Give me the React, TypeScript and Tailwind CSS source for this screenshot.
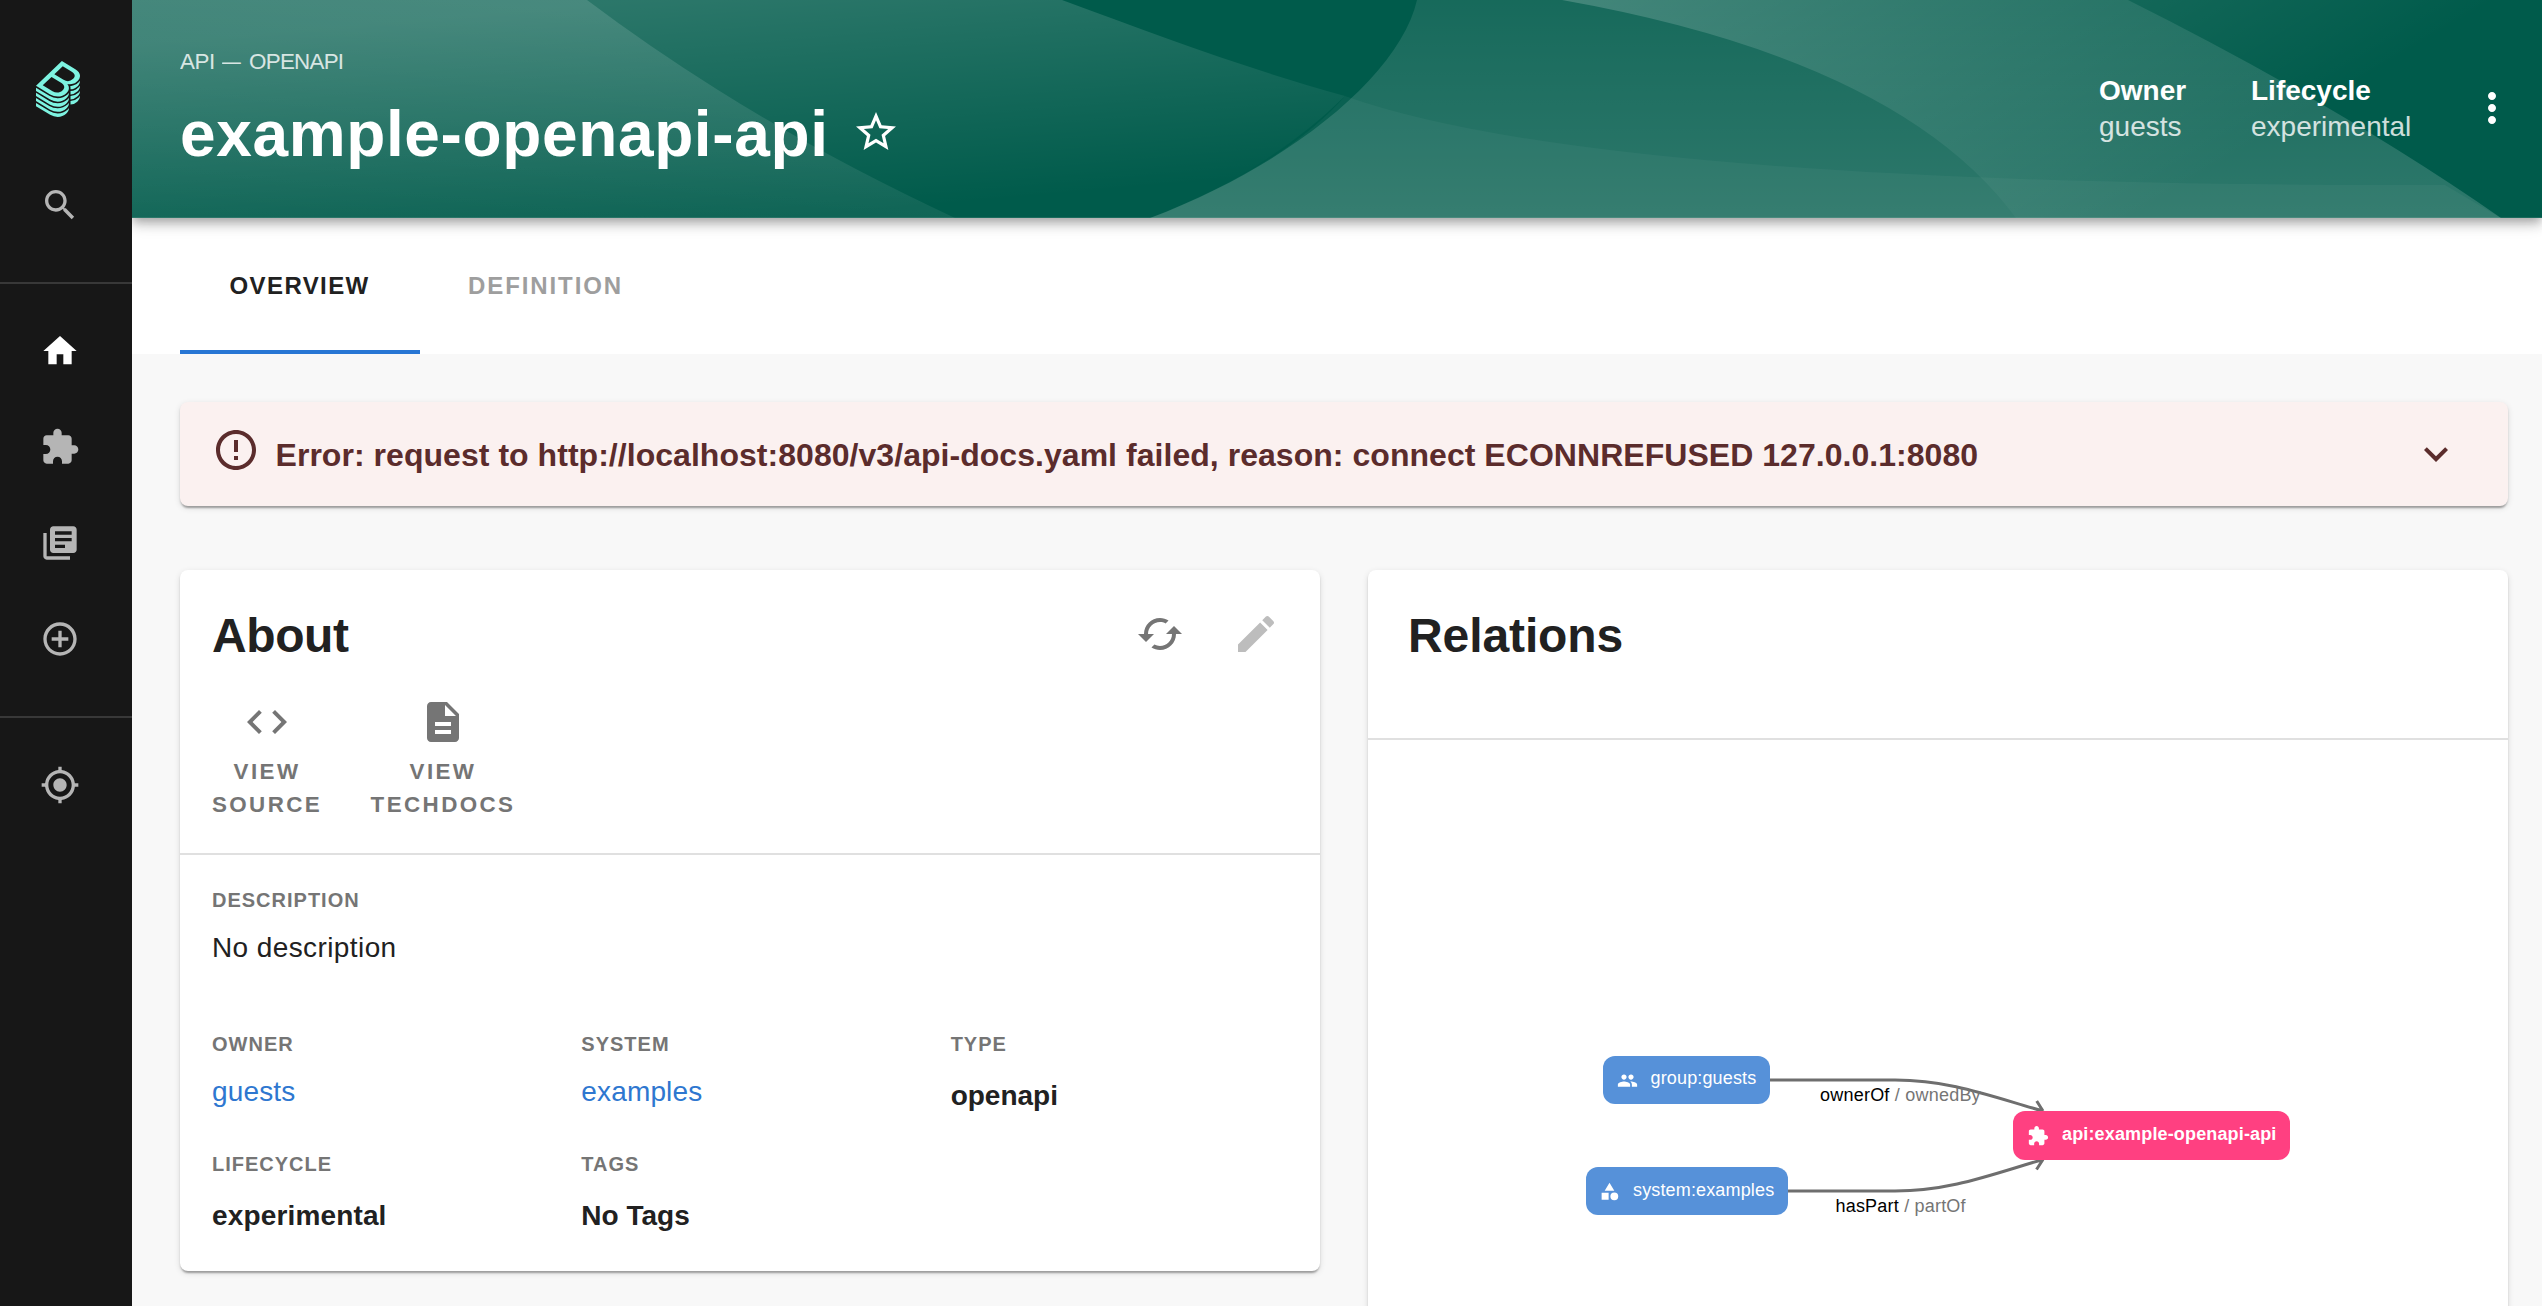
import type { ReactNode } from "react";

const ICONS = {
  search: "M15.5 14h-.79l-.28-.27C15.41 12.59 16 11.11 16 9.5 16 5.91 13.09 3 9.5 3S3 5.91 3 9.5 5.91 16 9.5 16c1.61 0 3.09-.59 4.23-1.57l.27.28v.79l5 4.99L20.49 19l-4.99-5zm-6 0C7.01 14 5 11.99 5 9.5S7.01 5 9.5 5 14 7.01 14 9.5 11.99 14 9.5 14z",
  home: "M10 20v-6h4v6h5v-8h3L12 3 2 12h3v8z",
  extension: "M20.5 11H19V7c0-1.1-.9-2-2-2h-4V3.5C13 2.12 11.88 1 10.5 1S8 2.12 8 3.5V5H4c-1.1 0-1.99.9-1.99 2v3.8H3.5c1.49 0 2.7 1.21 2.7 2.7s-1.21 2.7-2.7 2.7H2V20c0 1.1.9 2 2 2h3.8v-1.5c0-1.49 1.21-2.7 2.7-2.7 1.49 0 2.7 1.21 2.7 2.7V22H17c1.1 0 2-.9 2-2v-4h1.5c1.38 0 2.5-1.12 2.5-2.5S21.88 11 20.5 11z",
  library: "M4 6H2v14c0 1.1.9 2 2 2h14v-2H4V6zm16-4H8c-1.1 0-2 .9-2 2v12c0 1.1.9 2 2 2h12c1.1 0 2-.9 2-2V4c0-1.1-.9-2-2-2zm-1 9H9V9h10v2zm-4 4H9v-2h6v2zm4-8H9V5h10v2z",
  add: "M13 7h-2v4H7v2h4v4h2v-4h4v-2h-4V7zm-1-5C6.48 2 2 6.48 2 12s4.48 10 10 10 10-4.48 10-10S17.52 2 12 2zm0 18c-4.41 0-8-3.59-8-8s3.59-8 8-8 8 3.59 8 8-3.59 8-8 8z",
  location: "M12 8c-2.21 0-4 1.79-4 4s1.79 4 4 4 4-1.79 4-4-1.79-4-4-4zm8.94 3c-.46-4.17-3.77-7.48-7.94-7.94V1h-2v2.06C6.83 3.52 3.52 6.83 3.06 11H1v2h2.06c.46 4.17 3.77 7.48 7.94 7.94V23h2v-2.06c4.17-.46 7.48-3.77 7.94-7.94H23v-2h-2.06zM12 19c-3.87 0-7-3.13-7-7s3.13-7 7-7 7 3.13 7 7-3.13 7-7 7z",
  star: "M22 9.24l-7.19-.62L12 2 9.19 8.63 2 9.24l5.46 4.73L5.82 21 12 17.27 18.18 21l-1.63-7.03L22 9.24zM12 15.4l-3.76 2.27 1-4.28-3.32-2.88 4.38-.38L12 6.1l1.71 4.04 4.38.38-3.32 2.88 1 4.28L12 15.4z",
  more: "M12 8c1.1 0 2-.9 2-2s-.9-2-2-2-2 .9-2 2 .9 2 2 2zm0 2c-1.1 0-2 .9-2 2s.9 2 2 2 2-.9 2-2-.9-2-2-2zm0 6c-1.1 0-2 .9-2 2s.9 2 2 2 2-.9 2-2-.9-2-2-2z",
  error: "M11 15h2v2h-2zm0-8h2v6h-2zm.99-5C6.47 2 2 6.48 2 12s4.47 10 9.99 10C17.52 22 22 17.52 22 12S17.52 2 11.99 2zM12 20c-4.42 0-8-3.58-8-8s3.58-8 8-8 8 3.58 8 8-3.58 8-8 8z",
  expand: "M16.59 8.59L12 13.17 7.41 8.59 6 10l6 6 6-6z",
  cached: "M19 8l-4 4h3c0 3.31-2.69 6-6 6-1.01 0-1.97-.25-2.8-.7l-1.46 1.46C8.97 19.54 10.43 20 12 20c4.42 0 8-3.58 8-8h3l-4-4zM6 12c0-3.31 2.69-6 6-6 1.01 0 1.97.25 2.8.7l1.46-1.46C15.03 4.46 13.57 4 12 4c-4.42 0-8 3.58-8 8H1l4 4 4-4H6z",
  edit: "M3 17.25V21h3.75L17.81 9.94l-3.75-3.75L3 17.25zM20.71 7.04c.39-.39.39-1.02 0-1.41l-2.34-2.34c-.39-.39-1.02-.39-1.41 0l-1.83 1.83 3.75 3.75 1.83-1.83z",
  code: "M9.4 16.6L4.8 12l4.6-4.6L8 6l-6 6 6 6 1.4-1.4zm5.2 0l4.6-4.6-4.6-4.6L16 6l6 6-6 6-1.4-1.4z",
  description: "M14 2H6c-1.1 0-1.99.9-1.99 2L4 20c0 1.1.89 2 1.99 2H18c1.1 0 2-.9 2-2V8l-6-6zm2 16H8v-2h8v2zm0-4H8v-2h8v2zm-3-5V3.5L18.5 9H13z",
  people: "M16 11c1.66 0 2.99-1.34 2.99-3S17.66 5 16 5c-1.66 0-3 1.34-3 3s1.34 3 3 3zm-8 0c1.66 0 2.99-1.34 2.99-3S9.66 5 8 5C6.34 5 5 6.34 5 8s1.34 3 3 3zm0 2c-2.33 0-7 1.17-7 3.5V19h14v-2.5c0-2.33-4.67-3.5-7-3.5zm8 0c-.29 0-.62.02-.97.05 1.16.84 1.97 1.97 1.97 3.45V19h6v-2.5c0-2.33-4.67-3.5-7-3.5z",
  category: "M12 2l-5.5 9h11z M17.5 13a4.5 4.5 0 1 0 0 9 4.5 4.5 0 1 0 0-9z M3 13.5h8v8H3z",
};

type IconName = keyof typeof ICONS;

function Icon({ name, className }: { name: IconName; className: string }) {
  return (
    <svg viewBox="0 0 24 24" fill="currentColor" aria-hidden="true" className={`shrink-0 ${className}`}>
      <path d={ICONS[name]} />
    </svg>
  );
}

function Logo() {
  return (
    <svg viewBox="0 0 337.46 428.5" fill="#7df3e1" className="mt-[61px] ml-9 h-14 w-11">
      <path d="M303,166.05a80.69,80.69,0,0,0,13.45-10.37c.79-.77,1.55-1.53,2.3-2.3a83.12,83.12,0,0,0,7.93-9.38A63.69,63.69,0,0,0,333,133.23a48.58,48.58,0,0,0,4.35-16.4c1.49-19.39-10-38.67-35.62-54.22L198.56,0,78.3,115.23,0,190.25l108.6,65.91a111.59,111.59,0,0,0,57.76,16.41c24.92,0,48.8-8.8,66.42-25.69,19.16-18.36,25.52-42.12,13.7-61.87a49.22,49.22,0,0,0-6.8-8.87A89.17,89.17,0,0,0,259,178.29h.15a85.08,85.08,0,0,0,31-5.79A80.88,80.88,0,0,0,303,166.05ZM202.45,225.86c-19.32,18.51-50.4,21.23-75.7,5.9L51.61,186.15l67.45-64.64,76.41,46.38C223,184.58,221.49,207.61,202.45,225.86Zm8.93-82.22-70.65-42.89L205.14,39,274.51,81.1c25.94,15.72,29.31,37,10.55,55A60.69,60.69,0,0,1,211.38,143.64Zm29.86,190c-19.57,18.75-46.17,29.09-74.88,29.09a123.73,123.73,0,0,1-64.1-18.2L0,282.52v24.67L108.6,373.1a111.6,111.6,0,0,0,57.76,16.42c24.92,0,48.8-8.81,66.42-25.69,12.88-12.34,20-27.13,19.68-41.49v-1.79A87.27,87.27,0,0,1,241.24,333.68Zm0-39c-19.57,18.75-46.17,29.08-74.88,29.08a123.81,123.81,0,0,1-64.1-18.19L0,243.53v24.68l108.6,65.91a111.6,111.6,0,0,0,57.76,16.42c24.92,0,48.8-8.81,66.42-25.69,12.88-12.34,20-27.13,19.68-41.5v-1.78A87.27,87.27,0,0,1,241.24,294.7Zm0-39c-19.57,18.76-46.17,29.09-74.88,29.09a123.81,123.81,0,0,1-64.1-18.19L0,204.55v24.68l108.6,65.91a111.59,111.59,0,0,0,57.76,16.41c24.92,0,48.8-8.8,66.42-25.68,12.88-12.35,20-27.13,19.68-41.5v-1.82A86.09,86.09,0,0,1,241.24,255.71Zm83.7,25.74a94.15,94.15,0,0,1-60.2,25.86h0V334a81.6,81.6,0,0,0,51.74-22.37c14-13.38,21.14-28.11,21-42.64v-2.19A94.92,94.92,0,0,1,324.94,281.45Zm-83.7,91.21c-19.57,18.76-46.17,29.09-74.88,29.09a123.73,123.73,0,0,1-64.1-18.2L0,321.5v24.68l108.6,65.9a111.6,111.6,0,0,0,57.76,16.42c24.92,0,48.8-8.8,66.42-25.69,12.88-12.34,20-27.13,19.68-41.49v-1.79A86.29,86.29,0,0,1,241.24,372.66ZM327,162.45c-.68.69-1.35,1.38-2.05,2.06a94.37,94.37,0,0,1-10.64,8.65,91.35,91.35,0,0,1-11.6,7,94.53,94.53,0,0,1-26.24,8.71,97.69,97.69,0,0,1-14.16,1.57c.5,1.61.9,3.25,1.25,4.9a53.27,53.27,0,0,1,1.14,12V217h.05a84.41,84.41,0,0,0,25.35-5.55,81,81,0,0,0,26.39-16.82c.8-.77,1.5-1.56,2.26-2.34a82.08,82.08,0,0,0,7.93-9.38A63.76,63.76,0,0,0,333,172.17a48.55,48.55,0,0,0,4.32-16.45c.09-1.23.2-2.47.19-3.7V150q-1.08,1.54-2.25,3.09A96.73,96.73,0,0,1,327,162.45Zm0,77.92c-.69.7-1.31,1.41-2,2.1a94.2,94.2,0,0,1-60.2,25.86h0l0,26.67h0a81.6,81.6,0,0,0,51.74-22.37A73.51,73.51,0,0,0,333,250.13a48.56,48.56,0,0,0,4.32-16.44c.09-1.24.2-2.47.19-3.71v-2.19c-.74,1.07-1.46,2.15-2.27,3.21A95.68,95.68,0,0,1,327,240.37Zm0-39c-.69.7-1.31,1.41-2,2.1a93.18,93.18,0,0,1-10.63,8.65,91.63,91.63,0,0,1-11.63,7,95.47,95.47,0,0,1-37.94,10.18h0V256h0a81.65,81.65,0,0,0,51.74-22.37c.8-.77,1.5-1.56,2.26-2.34a82.08,82.08,0,0,0,7.93-9.38A63.76,63.76,0,0,0,333,211.15a48.56,48.56,0,0,0,4.32-16.44c.09-1.24.2-2.48.19-3.71v-2.2c-.74,1.08-1.46,2.16-2.27,3.22A95.68,95.68,0,0,1,327,201.39Z" />
    </svg>
  );
}

function NavItem({ name, active = false }: { name: IconName; active?: boolean }) {
  return (
    <a className={`flex h-24 items-center pl-10 ${active ? "text-white" : "text-[#b5b5b5]"}`}>
      <Icon name={name} className="size-10" />
    </a>
  );
}

function Sidebar() {
  return (
    <nav className="flex w-[132px] shrink-0 flex-col bg-[#171717]">
      <Logo />
      <div className="mt-10">
        <NavItem name="search" />
      </div>
      <hr className="mt-[29px] mb-[19px] h-0.5 border-0 bg-[#383838]" />
      <NavItem name="home" active />
      <NavItem name="extension" />
      <NavItem name="library" />
      <NavItem name="add" />
      <hr className="mt-[29px] mb-[19px] h-0.5 border-0 bg-[#383838]" />
      <NavItem name="location" />
    </nav>
  );
}

function HeaderWaves() {
  return (
    <svg viewBox="132 0 2410 218" preserveAspectRatio="none" className="absolute inset-0 h-full w-full">
      <defs>
        <linearGradient id="left" gradientUnits="userSpaceOnUse" x1="535" y1="0" x2="512" y2="270">
          <stop offset="0" stopColor="#fff" stopOpacity="0.135" />
          <stop offset="1" stopColor="#fff" stopOpacity="0.03" />
        </linearGradient>
        <linearGradient id="hill" gradientUnits="userSpaceOnUse" x1="700" y1="-5" x2="720" y2="225">
          <stop offset="0" stopColor="#fff" stopOpacity="0.17" />
          <stop offset="1" stopColor="#fff" stopOpacity="0" />
        </linearGradient>
        <linearGradient id="bowl" gradientUnits="userSpaceOnUse" x1="0" y1="0" x2="0" y2="218">
          <stop offset="0" stopColor="#fff" stopOpacity="0.09" />
          <stop offset="1" stopColor="#fff" stopOpacity="0.18" />
        </linearGradient>
        <linearGradient id="disc" gradientUnits="userSpaceOnUse" x1="1560" y1="0" x2="1809" y2="415">
          <stop offset="0" stopColor="#fff" stopOpacity="0.19" />
          <stop offset="1" stopColor="#fff" stopOpacity="0" />
        </linearGradient>
      </defs>
      <path fill="url(#hill)" d="M132 0H1062C1160 36 1250 70 1345 96C1280 160 1200 200 1150 218H132Z" />
      <path fill="url(#left)" d="M132 0H587Q648 46 718 90Q826 158 955 218H132Z" />
      <path fill="url(#bowl)" d="M1417 0C1400 75 1290 165 1150 218H2501Q2340 106 2128 0Z" />
      <path fill="#fff" fillOpacity="0.04" d="M1345 96Q1600 187 2445 185L2501 218H1150Q1285 165 1345 96Z" />
      <path fill="url(#disc)" d="M1562 0Q1900 60 2016 218H2542V0Z" />
      <path fill="#fff" fillOpacity="0.1" d="M132 217H2542V218H132Z" />
    </svg>
  );
}

function HeaderFact({ label, value, className }: { label: string; value: string; className: string }) {
  return (
    <div className={`pt-[73px] text-[28px] leading-9 ${className}`}>
      <div className="font-bold">{label}</div>
      <div className="opacity-80">{value}</div>
    </div>
  );
}

function Header() {
  return (
    <header className="relative z-10 flex h-[218px] shrink-0 bg-[#005b4b] pl-12 pr-[26px] text-white shadow-[0_4px_8px_-2px_rgba(0,0,0,0.2),0_8px_10px_0_rgba(0,0,0,0.14),0_2px_20px_0_rgba(0,0,0,0.12)]">
      <HeaderWaves />
      <div className="relative flex-1 pt-[46px]">
        <div className="text-[22.4px] leading-8 tracking-[-0.4px] uppercase opacity-80">
          api <span className="ml-px inline-block w-[21.5px] origin-left scale-x-[0.84]">—</span>{" "}
          <span className="tracking-[-0.75px]">openapi</span>
        </div>
        <div className="mt-[18px] flex items-start">
          <h1 className="w-[672px] text-[64px] leading-[76px] font-bold tracking-[0.63px] whitespace-nowrap">example-openapi-api</h1>
          <Icon name="star" className="mt-3 size-12" />
        </div>
      </div>
      <div className="relative flex items-start">
        <HeaderFact label="Owner" value="guests" className="w-[152px]" />
        <HeaderFact label="Lifecycle" value="experimental" className="w-[217px]" />
        <Icon name="more" className="mt-[84px] size-12" />
      </div>
    </header>
  );
}

function Tabs() {
  return (
    <div className="flex h-[136px] shrink-0 bg-white pl-12 text-2xl font-bold uppercase">
      <div className="flex w-60 items-center pl-[49.5px] tracking-[1.4px] text-[#212121] shadow-[inset_0_-4px_0_#2776d4]">Overview</div>
      <div className="flex items-center pl-12 tracking-[1.9px] text-[#9e9e9e]">Definition</div>
    </div>
  );
}

const CARD_SHADOW = "shadow-[0_4px_2px_-2px_rgba(0,0,0,0.2),0_2px_2px_0_rgba(0,0,0,0.14),0_2px_6px_0_rgba(0,0,0,0.12)]";

function ErrorBanner() {
  return (
    <div className={`flex h-[104px] items-start rounded-lg bg-[#fbf1f0] pr-12 pl-8 text-[#5b2c2c] ${CARD_SHADOW}`}>
      <Icon name="error" className="mt-6 size-12" />
      <div className="mt-[29px] ml-[15.5px] flex-1 text-[32px] leading-[48px] font-bold tracking-[0.04px] whitespace-nowrap">
        Error: request to http://localhost:8080/v3/api-docs.yaml failed, reason: connect ECONNREFUSED 127.0.0.1:8080
      </div>
      <Icon name="expand" className="mt-7 size-12" />
    </div>
  );
}

function QuickLink({ icon, lines, className }: { icon: IconName; lines: string[]; className: string }) {
  return (
    <a className={`flex flex-col items-center ${className}`}>
      <Icon name={icon} className="size-12" />
      <span className="mt-[9px] text-center text-[22.4px] leading-[33px] font-bold tracking-[2.4px]">
        {lines.map((line) => (
          <span key={line} className="block">{line}</span>
        ))}
      </span>
    </a>
  );
}

function Field({ label, children, className = "" }: { label: string; children: ReactNode; className?: string }) {
  return (
    <div className={className}>
      <div className="text-xl leading-7 font-bold tracking-[1px] text-[#757575] uppercase">{label}</div>
      {children}
    </div>
  );
}

function AboutCard() {
  return (
    <section className={`h-[701px] rounded-lg bg-white ${CARD_SHADOW}`}>
      <div className="flex h-[283px] flex-col pt-[38px] pr-10 pl-8">
        <div className="flex items-start">
          <h2 className="flex-1 text-5xl leading-[56px] font-bold tracking-[-0.4px]">About</h2>
          <Icon name="cached" className="mt-0.5 size-12 text-[#757575]" />
          <Icon name="edit" className="mt-0.5 ml-12 size-12 text-[#bdbdbd]" />
        </div>
        <div className="mt-[34px] flex gap-12 text-[#757575]">
          <QuickLink icon="code" lines={["VIEW", "SOURCE"]} className="w-[110px]" />
          <QuickLink icon="description" lines={["VIEW", "TECHDOCS"]} className="w-[146px]" />
        </div>
      </div>
      <hr className="h-0.5 border-0 bg-[#e0e0e0]" />
      <div className="grid grid-cols-3 grid-rows-[144px_120px_121px] pt-[31px] pl-8 text-[28px] leading-10">
        <Field label="Description" className="col-span-3">
          <p className="mt-3.5 tracking-[0.4px]">No description</p>
        </Field>
        <Field label="Owner">
          <a className="mt-3.5 block tracking-[0.15px] text-[#2e77d0]">guests</a>
        </Field>
        <Field label="System">
          <a className="mt-3.5 block tracking-[0.15px] text-[#2e77d0]">examples</a>
        </Field>
        <Field label="Type">
          <p className="mt-[18px] font-bold">openapi</p>
        </Field>
        <Field label="Lifecycle">
          <p className="mt-[18px] font-bold tracking-[0.15px]">experimental</p>
        </Field>
        <Field label="Tags">
          <p className="mt-[18px] font-bold">No Tags</p>
        </Field>
      </div>
    </section>
  );
}

function Graph() {
  return (
    <div className="relative h-[700px] text-[18px] leading-6 tracking-[0.15px] whitespace-nowrap">
      <svg viewBox="1368 740 1140 700" fill="none" stroke="#6e6e6e" strokeWidth="3" className="absolute inset-0 h-full w-full">
        <path d="M1769 1080H1895C1950 1080 1990 1096 2043 1111M2036.700 1101L2043 1111" />
        <path d="M1786 1191H1895C1950 1191 1990 1175 2043 1159.500M2036.500 1169.500L2043 1159.500" />
      </svg>
      <div className="absolute top-[343px] left-[452px] tracking-[0.22px] text-black">ownerOf <span className="text-[#757575]">/ ownedBy</span></div>
      <div className="absolute top-[454px] left-[467.5px] tracking-[0.2px] text-black">hasPart <span className="text-[#757575]">/ partOf</span></div>
      <div className="absolute top-[316px] left-[235px] flex h-12 w-[167px] items-center rounded-xl bg-[#5691d9] pl-[14px] text-white">
        <Icon name="people" className="size-[21px]" />
        <span className="ml-[12.5px] -mt-[5px]">group:guests</span>
      </div>
      <div className="absolute top-[427px] left-[218px] flex h-12 w-[202px] items-center rounded-xl bg-[#5691d9] pl-[13px] text-white">
        <Icon name="category" className="size-[21px]" />
        <span className="ml-[13px] -mt-[3px]">system:examples</span>
      </div>
      <div className="absolute top-[371px] left-[645px] flex h-[49px] w-[277px] items-center rounded-xl bg-[#ff4081] pl-[14px] font-bold text-white">
        <Icon name="extension" className="size-[22px]" />
        <span className="ml-[13px] -mt-[3px]">api:example-openapi-api</span>
      </div>
    </div>
  );
}

function RelationsCard() {
  return (
    <section className={`h-[868px] rounded-lg bg-white ${CARD_SHADOW}`}>
      <div className="h-[168px] pt-[38px] pl-10">
        <h2 className="text-5xl leading-[56px] font-bold tracking-[-0.1px]">Relations</h2>
      </div>
      <hr className="h-0.5 border-0 bg-[#e0e0e0]" />
      <Graph />
    </section>
  );
}

export default function App() {
  return (
    <div className="flex h-[1306px] w-[2542px] overflow-hidden bg-[#f8f8f8] font-['Liberation_Sans',Arial,sans-serif] text-[#212121]">
      <Sidebar />
      <main className="flex min-w-0 flex-1 flex-col overflow-hidden">
        <Header />
        <Tabs />
        <div className="pt-12 pr-[34px] pl-12">
          <ErrorBanner />
          <div className="mt-16 grid grid-cols-2 items-start gap-12">
            <AboutCard />
            <RelationsCard />
          </div>
        </div>
      </main>
    </div>
  );
}
